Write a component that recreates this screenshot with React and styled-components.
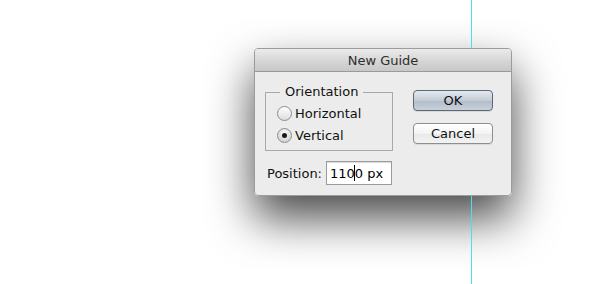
import React from "react";
import styled, { createGlobalStyle } from "styled-components";

const Global = createGlobalStyle`
  html, body { margin: 0; padding: 0; background: #fff; }
  body { font-family: "DejaVu Sans", "Liberation Sans", sans-serif; }
`;

const Canvas = styled.div`
  position: relative;
  width: 600px;
  height: 284px;
  overflow: hidden;
  background: #fff;
`;

const Shadow = styled.div`
  position: absolute;
  left: 254px;
  top: 48px;
  width: 258px;
  height: 148px;
  border-radius: 4px;
  box-shadow: 0 22px 46px rgba(0, 0, 0, 0.72);
`;

const Guide = styled.div`
  position: absolute;
  left: 471px;
  top: 0;
  width: 1px;
  height: 284px;
  background: #3fe4ee;
`;

const Dialog = styled.div`
  position: absolute;
  left: 254px;
  top: 48px;
  width: 256px;
  height: 146px;
  border: 1px solid #9c9c9c;
  border-radius: 4px;
  background: #ececec;
  overflow: hidden;
  display: flex;
  flex-direction: column;
`;

const TitleBar = styled.div`
  height: 22px;
  flex: none;
  border-bottom: 1px solid #9a9a9a;
  background: linear-gradient(#ebebeb, #d4d4d4 60%, #c8c8c8);
  display: flex;
  align-items: center;
  justify-content: center;
  font-size: 13px;
  color: #2e2e2e;
`;

const Body = styled.div`
  display: grid;
  grid-template-columns: 128px 1fr;
  grid-template-rows: auto auto;
  column-gap: 20px;
  padding: 13px 0 0 10px;
`;

const Fieldset = styled.fieldset`
  margin: 0;
  padding: 6px 0 0 11px;
  border: 1px solid #a9a9a9;
  height: 66px;
  box-sizing: border-box;
  display: flex;
  flex-direction: column;
  gap: 6px;
`;

const Legend = styled.legend`
  padding: 0 5px;
  margin-left: 3px;
  font-size: 13px;
  color: #111;
  line-height: 14px;
`;

const RadioRow = styled.label`
  display: flex;
  align-items: center;
  gap: 3px;
  font-size: 13px;
  color: #111;
  height: 16px;
`;

const RadioCircle = styled.span`
  width: 15px;
  height: 15px;
  box-sizing: border-box;
  border-radius: 50%;
  border: 1px solid #8c8c8c;
  background: ${(p) =>
    p.checked
      ? "radial-gradient(circle at 50% 35%, #fdfdfd, #d6d6d6 70%, #c2c2c2)"
      : "linear-gradient(#ffffff, #ececec 55%, #dcdcdc)"};
  display: flex;
  align-items: center;
  justify-content: center;
  flex: none;
  &::after {
    content: "";
    display: ${(p) => (p.checked ? "block" : "none")};
    width: 5px;
    height: 5px;
    border-radius: 50%;
    background: #1a1a1a;
  }
`;

const Buttons = styled.div`
  display: flex;
  flex-direction: column;
  gap: 12px;
  padding-top: 5px;
`;

const Button = styled.button`
  width: 80px;
  height: 21px;
  box-sizing: border-box;
  border-radius: 4px;
  padding: 0;
  font-family: inherit;
  font-size: 13px;
  color: #111;
  border: 1px solid ${(p) => (p.primary ? "#5e6875" : "#8e8e8e")};
  background: ${(p) =>
    p.primary
      ? "linear-gradient(#e3e9ef, #c3ccd6 50%, #b2bdc9 52%, #c8d1db)"
      : "linear-gradient(#ffffff, #f4f4f4 50%, #e8e8e8 52%, #f3f3f3)"};
  box-shadow: 0 1px 0 rgba(0, 0, 0, 0.08);
`;

const PositionRow = styled.div`
  grid-column: 1 / span 2;
  display: flex;
  align-items: center;
  gap: 4px;
  margin-top: 10px;
  margin-left: 2px;
  font-size: 13px;
  color: #111;
`;

const Input = styled.div`
  width: 66px;
  height: 24px;
  box-sizing: border-box;
  background: #fff;
  border: 1px solid #9b9b9b;
  box-shadow: inset 0 1px 1px rgba(0, 0, 0, 0.15);
  display: flex;
  align-items: center;
  padding-left: 3px;
  font-size: 13px;
  color: #000;
`;

const Caret = styled.span`
  display: inline-block;
  width: 1px;
  height: 16px;
  background: #000;
  margin: 0 -0.5px;
`;

export default function App() {
  return (
    <>
      <Global />
      <Canvas>
        <Shadow />
        <Guide />
        <Dialog>
          <TitleBar>New Guide</TitleBar>
          <Body>
            <Fieldset>
              <Legend>Orientation</Legend>
              <RadioRow>
                <RadioCircle />
                Horizontal
              </RadioRow>
              <RadioRow>
                <RadioCircle checked />
                Vertical
              </RadioRow>
            </Fieldset>
            <Buttons>
              <Button primary>OK</Button>
              <Button>Cancel</Button>
            </Buttons>
            <PositionRow>
              Position:
              <Input>
                110
                <Caret />
                0 px
              </Input>
            </PositionRow>
          </Body>
        </Dialog>
      </Canvas>
    </>
  );
}
